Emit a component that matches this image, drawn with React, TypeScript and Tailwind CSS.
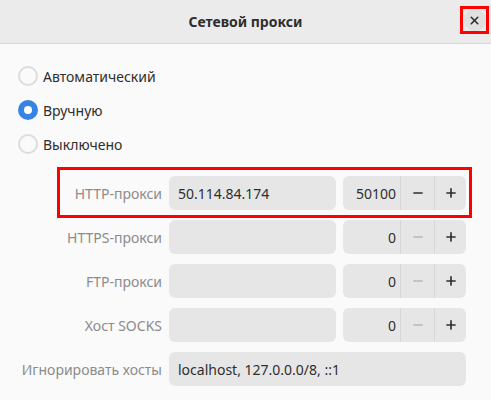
import { Minus, Plus, X } from "lucide-react";

const font = { fontFamily: '"Noto Sans", "Open Sans", sans-serif' };

function Radio({ label, checked }: { label: string; checked?: boolean }) {
  return (
    <div className="flex items-center h-[34px]">
      {checked ? (
        <div className="ml-[18px] h-[20px] w-[20px] rounded-full bg-[#3584e4] flex items-center justify-center">
          <div className="h-[8px] w-[8px] rounded-full bg-white" />
        </div>
      ) : (
        <div className="ml-[18px] h-[20px] w-[20px] rounded-full border-2 border-[#dcdcdc] bg-[#fafafa]" />
      )}
      <span className="ml-[5px] text-[14px] text-[#2e2e2e]">{label}</span>
    </div>
  );
}

function SpinBox({ value, canDec }: { value: string; canDec?: boolean }) {
  return (
    <div className="ml-[7px] flex h-[34px] w-[123px] rounded-[6px] bg-[#e6e6e6]">
      <div className="flex w-[57px] items-center justify-end pr-[4px] text-[14px] text-[#2e2e2e]">
        {value}
      </div>
      <div className="flex w-[34px] items-center justify-center border-l border-[#d6d6d6]">
        <Minus size={14} strokeWidth={2.8} className={canDec ? "text-[#2e2e2e]" : "text-[#b8b8b8]"} />
      </div>
      <div className="flex w-[32px] items-center justify-center border-l border-[#d6d6d6]">
        <Plus size={14} strokeWidth={2.8} className="text-[#2e2e2e]" />
      </div>
    </div>
  );
}

function ProxyRow({ label, host, port, canDec }: { label: string; host: string; port: string; canDec?: boolean }) {
  return (
    <div className="flex items-center h-[34px]">
      <div className="w-[163px] pr-[1px] text-right text-[14px] text-[#8b8b8b]">{label}</div>
      <div className="ml-[6px] flex h-[34px] w-[167px] items-center rounded-[6px] bg-[#e6e6e6] px-[9px] text-[14px] text-[#2e2e2e]">
        {host}
      </div>
      <SpinBox value={port} canDec={canDec} />
    </div>
  );
}

export default function App() {
  return (
    <div className="h-[400px] w-[491px] overflow-hidden bg-[#fafafa]" style={font}>
      {/* Header */}
      <div className="relative flex h-[44px] items-center justify-center border-b border-[#d8d8d8] bg-[#ebebeb]">
        <span className="text-[14px] font-bold text-[#2e2e2e]">Сетевой прокси</span>
        <div className="absolute right-[2px] top-[6px] flex h-[28px] w-[29px] items-center justify-center border-[3px] border-[#ff0000]">
          <div className="flex h-[22px] w-[22px] items-center justify-center rounded-full bg-[#e0e0e0]">
            <X size={13} strokeWidth={3} className="text-[#2e2e2e]" />
          </div>
        </div>
      </div>

      {/* Mode radios */}
      <div className="flex flex-col pt-[15px]">
        <Radio label="Автоматический" />
        <Radio label="Вручную" checked />
        <Radio label="Выключено" />
      </div>

      {/* Proxy fields */}
      <div className="mt-[15px] flex flex-col gap-[10px]">
        <div className="relative">
          <ProxyRow label="HTTP-прокси" host="50.114.84.174" port="50100" canDec />
          <div className="pointer-events-none absolute left-[57px] top-[-9px] h-[51px] w-[415px] border-[3px] border-[#ff0000]" />
        </div>
        <ProxyRow label="HTTPS-прокси" host="" port="0" />
        <ProxyRow label="FTP-прокси" host="" port="0" />
        <ProxyRow label="Хост SOCKS" host="" port="0" />
        <div className="flex items-center h-[34px]">
          <div className="w-[163px] pr-[1px] text-right text-[14px] text-[#8b8b8b]">Игнорировать хосты</div>
          <div className="ml-[6px] flex h-[34px] w-[297px] items-center rounded-[6px] bg-[#e6e6e6] px-[9px] text-[14px] text-[#2e2e2e]">
            localhost, 127.0.0.0/8, ::1
          </div>
        </div>
      </div>
    </div>
  );
}
